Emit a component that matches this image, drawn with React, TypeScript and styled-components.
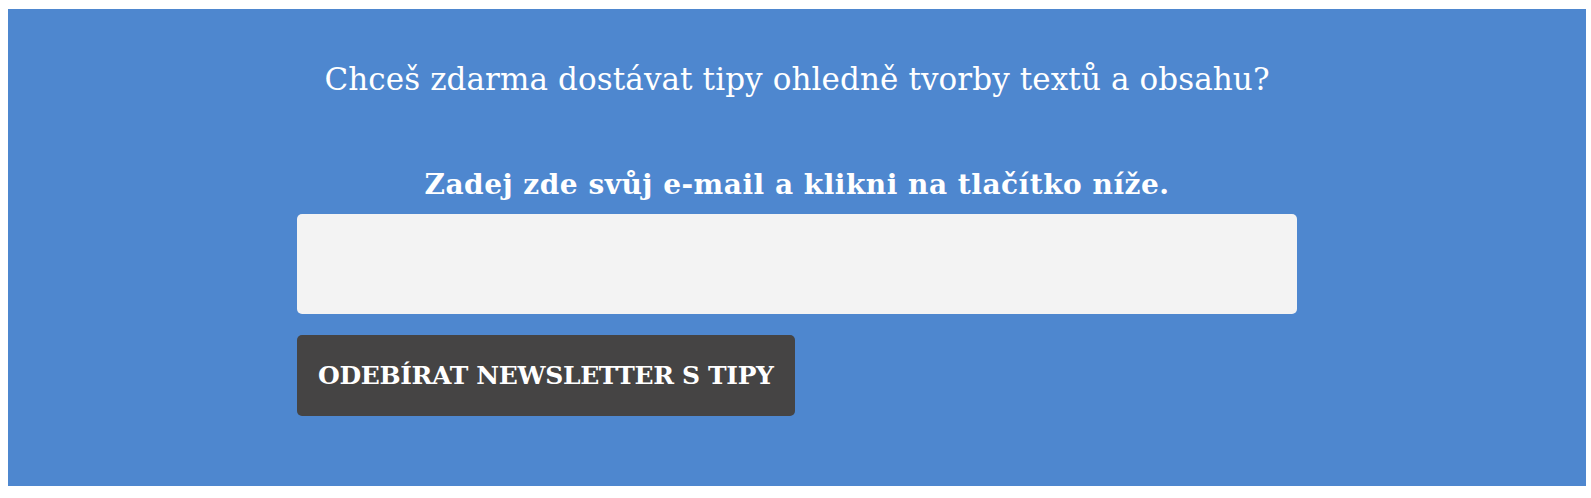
import React from 'react';
import styled, { createGlobalStyle } from 'styled-components';

const GlobalStyle = createGlobalStyle`
  body {
    margin: 9px 5px 0 8px;
    background: #ffffff;
    font-family: 'DejaVu Serif', 'Liberation Serif', serif;
  }
`;

const Section = styled.section`
  background-color: #4e87cf;
  color: #ffffff;
  padding: 47px 0 68px;
  height: 477px;
  box-sizing: border-box;
`;

const Inner = styled.div`
  width: 1000px;
  margin: 0 auto;
  display: flex;
  flex-direction: column;
`;

const Lead = styled.p`
  margin: 0 0 64px;
  font-size: 31px;
  line-height: 1.5;
  font-weight: 400;
  text-align: center;
  letter-spacing: 0.1px;
`;

const Prompt = styled.p`
  margin: 0 0 11px;
  font-size: 28px;
  line-height: 1.3;
  font-weight: 700;
  text-align: center;
  letter-spacing: 0.5px;
`;

const EmailInput = styled.input`
  display: block;
  width: 100%;
  height: 100px;
  box-sizing: border-box;
  border: none;
  border-radius: 5px;
  background-color: #f3f3f3;
  padding: 0 20px;
  font-family: inherit;
  font-size: 20px;
  outline: none;
`;

const SubmitButton = styled.button`
  align-self: flex-start;
  margin-top: 21px;
  height: 81px;
  padding: 0 21px;
  border: none;
  border-radius: 5px;
  background-color: #454444;
  color: #ffffff;
  font-family: 'DejaVu Serif', 'Liberation Serif', serif;
  font-weight: 700;
  font-size: 25px;
  letter-spacing: -0.35px;
  text-transform: uppercase;
  cursor: pointer;
`;

export default function App() {
  return (
    <>
      <GlobalStyle />
      <Section>
        <Lead>Chceš zdarma dostávat tipy ohledně tvorby textů a obsahu?</Lead>
        <Inner>
          <Prompt>Zadej zde svůj e-mail a klikni na tlačítko níže.</Prompt>
          <EmailInput type="email" aria-label="E-mail" />
          <SubmitButton type="submit">Odebírat newsletter s tipy</SubmitButton>
        </Inner>
      </Section>
    </>
  );
}
